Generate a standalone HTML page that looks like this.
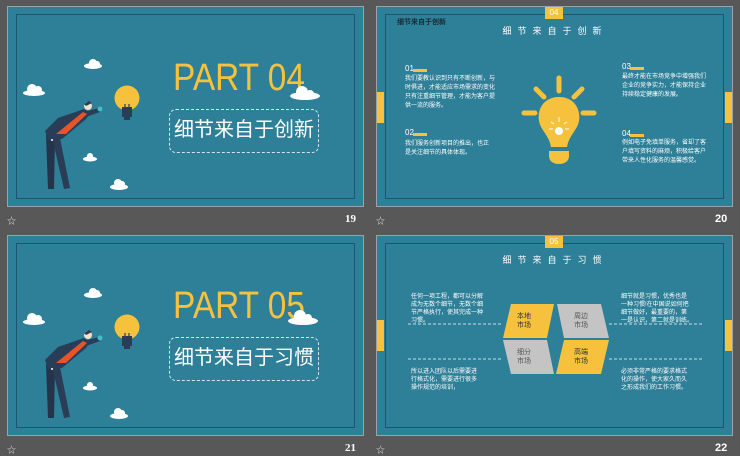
<!DOCTYPE html>
<html><head><meta charset="utf-8"><style>
*{margin:0;padding:0;box-sizing:border-box}
body{width:740px;height:455px;background:#585858;position:relative;overflow:hidden;font-family:"Liberation Sans","Noto Sans CJK SC",sans-serif}
.s{position:absolute;width:357px;height:201px;background:#2e7f98;border:1px solid #9aa4a8}
.fr{position:absolute;left:8px;top:7px;right:8px;bottom:7px;border:1px solid #1f5470}
.a{position:absolute;white-space:nowrap}
.part{color:#f6c23e;font-size:38px;transform:scaleX(0.88);transform-origin:left top}
.box{position:absolute;border:1.5px dashed #d8e6ec;border-radius:7px;color:#fff;font-size:20px;text-align:center}
.t{color:#fff;font-size:6px;line-height:9px}
.n{color:#fff;font-size:8px}
.bar{position:absolute;height:3px;width:14px;background:#f6c23e}
.tab{position:absolute;width:7px;height:31px;background:#f6c23e}
.ttl{color:#fff;font-size:9px;letter-spacing:6px}
.num{position:absolute;color:#fff;font-size:11px;font-weight:bold;font-family:"Liberation Serif",serif}
.star{position:absolute;color:#ddd;font-size:9px}
.badge{position:absolute;width:18px;height:12px;background:#f6c23e;color:#fff;font-size:8px;text-align:center;line-height:11px}
</style></head><body>

<svg width="0" height="0" style="position:absolute">
<defs>
<g id="scene">
 <g fill="#fff">
  <ellipse cx="85" cy="59" rx="9" ry="3"/><circle cx="85" cy="56" r="4"/><circle cx="89" cy="57" r="3"/>
  <ellipse cx="26" cy="86" rx="11" ry="3"/><circle cx="24" cy="82" r="5"/><circle cx="30" cy="83" r="4"/>
  <ellipse cx="82" cy="152" rx="7" ry="2.5"/><circle cx="82" cy="149" r="3"/>
  <ellipse cx="111" cy="180" rx="9" ry="3"/><circle cx="110" cy="176" r="4"/><circle cx="114" cy="177" r="3"/>
 </g>
 <circle cx="119" cy="91" r="12.5" fill="#f6c23e"/>
 <rect x="114" y="100" width="10" height="10" fill="#2a3d57"/>
 <rect x="116" y="109" width="6" height="4" fill="#2a3d57"/>
 <path d="M117 97v6M121 97v6" stroke="#2a3d57" stroke-width="1.2"/>
 <!-- man -->
 <path d="M38 128 L47 130 L46 182 L40 182 Z" fill="#24344b"/>
 <path d="M44 130 L52 131 L62 181 L56 182 Z" fill="#2a3d57"/>
 <path d="M76 102 L82 106 L78 112 L54 132 L40 133 L37 124 L50 111 Z" fill="#2a3d57"/>
 <path d="M76 105 L91 101 L92 105 L78 110 Z" fill="#2a3d57"/>
 <path d="M75 105 L79 107 L58 127 L48 127 Z" fill="#e8532a"/>
 <circle cx="80" cy="99" r="4" fill="#f3e1cc"/>
 <path d="M76 97 L81 94 L84 96 L78 99Z" fill="#2a3d57"/>
 <circle cx="92" cy="102" r="2.5" fill="#3ec0c8"/>
 <circle cx="44" cy="133" r="1" fill="#fff"/>
</g>
</defs>
</svg>

<!-- slide 19 -->
<div class="s" style="left:7px;top:6px">
 <div class="fr"></div>
 <svg class="a" style="left:0;top:0" width="356" height="201"><use href="#scene"/></svg>
 <div class="a part" style="left:165px;top:50px">PART 04</div>
 <svg class="a" style="left:280px;top:79px" width="34" height="14"><g fill="#fff"><ellipse cx="17" cy="10" rx="15" ry="4"/><circle cx="14" cy="6" r="6"/><circle cx="22" cy="8" r="4"/></g></svg>
 <div class="box" style="left:161px;top:102px;width:150px;height:44px;line-height:40px">细节来自于创新</div>
</div>
<div class="star" style="left:7px;top:214px">☆</div>
<div class="num" style="left:345px;top:213px">19</div>

<!-- slide 20 -->
<div class="s" style="left:376px;top:6px">
 <div class="fr"></div>
 <div class="badge" style="left:168px;top:0">04</div>
 <div class="a" style="left:20px;top:10px;font-size:7px;font-weight:bold;color:#1a2a35">细节来自于创新</div>
 <div class="a ttl" style="left:0;width:356px;text-align:center;top:17px">细节来自于创新</div>
 <div class="tab" style="left:0;top:85px"></div><div class="tab" style="right:0;top:85px"></div>
 <svg class="a" style="left:140px;top:62px" width="85" height="100">
  <g stroke="#f6c23e" stroke-width="5" stroke-linecap="round">
   <path d="M42 9v13M19 20l8 8M65 20l-8 8M7 44h11M66 44h11"/>
  </g>
  <path d="M42 28 C27 28 20 40 22 52 C24 62 32 66 34 78 L50 78 C52 66 60 62 62 52 C64 40 57 28 42 28Z" fill="#f6c23e"/>
  <path d="M32 82h20v5c0 5-4 8-10 8s-10-3-10-8z" fill="#f6c23e"/>
  <g stroke="#fff" stroke-width="1"><path d="M42 53v-5M37 55l-3-2M47 55l3-2M36 60h-4M48 60h4"/></g>
  <circle cx="42" cy="62" r="4" fill="#fff"/>
 </svg>
 <div class="a n" style="left:28px;top:57px">01</div><div class="bar" style="left:36px;top:62px"></div>
 <div class="a t" style="left:28px;top:68px">我们要教认识到只有不断创新，与<br>时俱进，才能适应市场需求的变化<br>只有注重细节管理，才能为客户提<br>供一流的服务。</div>
 <div class="a n" style="left:28px;top:121px">02</div><div class="bar" style="left:36px;top:126px"></div>
 <div class="a t" style="left:28px;top:133px">我们服务创新项目的推出，也正<br>是关注细节的具体体现。</div>
 <div class="a n" style="left:245px;top:55px">03</div><div class="bar" style="left:253px;top:60px"></div>
 <div class="a t" style="left:245px;top:66px">最终才能在市场竞争中增强我们<br>企业的竞争实力，才能保持企业<br>持续稳定健康的发展。</div>
 <div class="a n" style="left:245px;top:122px">04</div><div class="bar" style="left:253px;top:127px"></div>
 <div class="a t" style="left:245px;top:132px">例如电子免填单服务，省却了客<br>户填写资料的麻烦，积极给客户<br>带来人性化服务的温馨感觉。</div>
</div>
<div class="star" style="left:376px;top:214px">☆</div>
<div class="num" style="left:715px;top:213px;font-family:'Liberation Sans',sans-serif">20</div>

<!-- slide 21 -->
<div class="s" style="left:7px;top:235px">
 <div class="fr"></div>
 <svg class="a" style="left:0;top:0" width="356" height="201"><use href="#scene"/></svg>
 <div class="a part" style="left:165px;top:49px">PART 05</div>
 <svg class="a" style="left:278px;top:73px" width="34" height="16"><g fill="#fff"><ellipse cx="17" cy="12" rx="15" ry="4"/><circle cx="14" cy="7" r="6"/><circle cx="22" cy="9" r="4"/></g></svg>
 <div class="box" style="left:161px;top:101px;width:150px;height:44px;line-height:40px">细节来自于习惯</div>
</div>
<div class="star" style="left:7px;top:443px">☆</div>
<div class="num" style="left:345px;top:442px">21</div>

<!-- slide 22 -->
<div class="s" style="left:376px;top:235px">
 <div class="fr"></div>
 <div class="badge" style="left:168px;top:0">05</div>
 <div class="a ttl" style="left:0;width:356px;text-align:center;top:17px">细节来自于习惯</div>
 <div class="tab" style="left:0;top:84px"></div><div class="tab" style="right:0;top:84px"></div>
 <svg class="a" style="left:0;top:0" width="356" height="201">
  <g stroke="#cfdde3" stroke-width="1" stroke-dasharray="3,2">
   <path d="M31 88h95M232 88h95M31 123h95M232 123h95"/>
  </g>
  <polygon points="134,68 177,68 170,102 126,102" fill="#f6c23e"/>
  <polygon points="180,68 224,68 232,102 187,102" fill="#c4c4c4"/>
  <polygon points="126,104 170,104 177,138 134,138" fill="#c4c4c4"/>
  <polygon points="187,104 232,104 224,138 179,138" fill="#f6c23e"/>
 </svg>
 <div class="a" style="left:140px;top:76px;font-size:7px;line-height:9px;text-align:center;color:#333">本地<br>市场</div>
 <div class="a" style="left:197px;top:76px;font-size:7px;line-height:9px;text-align:center;color:#555">周边<br>市场</div>
 <div class="a" style="left:140px;top:112px;font-size:7px;line-height:9px;text-align:center;color:#555">细分<br>市场</div>
 <div class="a" style="left:197px;top:112px;font-size:7px;line-height:9px;text-align:center;color:#333">高端<br>市场</div>
 <div class="a t" style="left:34px;top:57px;line-height:8px">任何一项工程，都可以分解<br>成为无数个细节，无数个细<br>节严格执行，使其完成一种<br>习惯。</div>
 <div class="a t" style="left:244px;top:57px;line-height:8px">细节就是习惯，优秀也是<br>一种习惯!在中国说如何把<br>细节做好，最重要的，第<br>一是认识，第二就是训练。</div>
 <div class="a t" style="left:34px;top:132px;line-height:8px">所以进入团队以后需要进<br>行格式化，需要进行很多<br>操作规范的培训，</div>
 <div class="a t" style="left:244px;top:132px;line-height:8px">必须非常严格的要求格式<br>化的操作，使大家久而久<br>之形成我们的工作习惯。</div>
</div>
<div class="star" style="left:376px;top:443px">☆</div>
<div class="num" style="left:715px;top:442px;font-family:'Liberation Sans',sans-serif">22</div>
</body></html>
